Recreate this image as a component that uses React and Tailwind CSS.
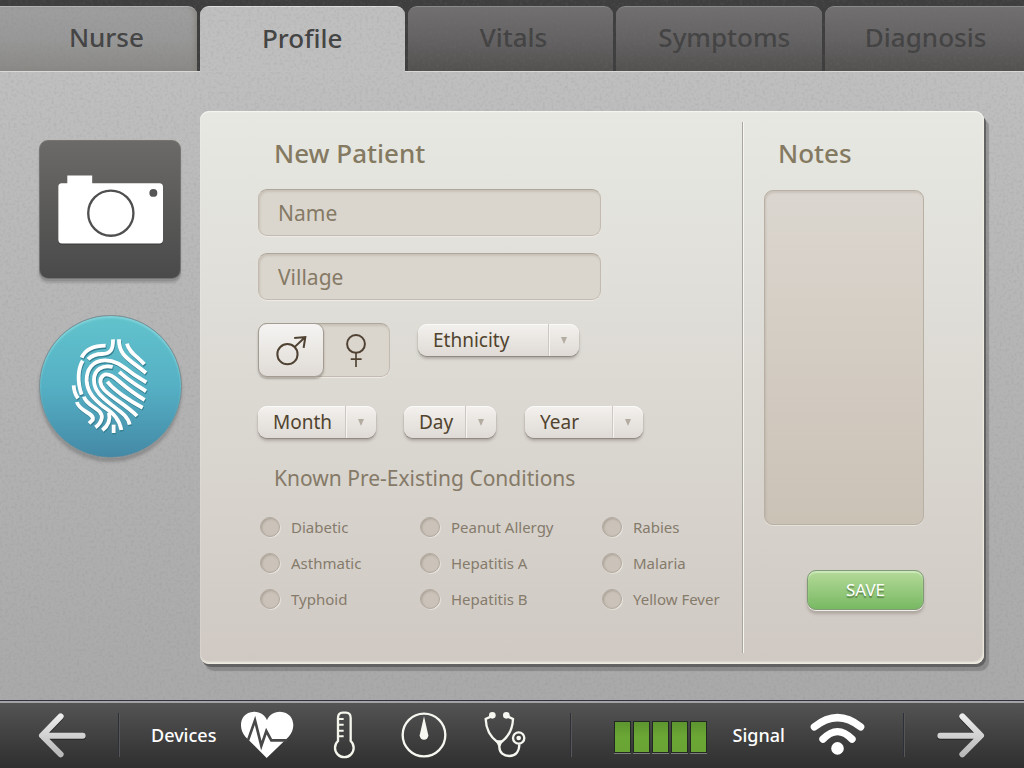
import React from "react";

const TABS = [
  { name: "Nurse", look: "rounded-tr-[9px] pl-4 text-[#444444] bg-linear-to-b from-[#9f9f9f] via-[#989898] to-[#8a8986] border-t border-[#b4b4b4] shadow-[inset_-5px_0_6px_-4px_#807e76]" },
  { name: "Profile", look: "rounded-t-[9px] text-[#434343] bg-[#bfbfbf] border-t border-[#dedede] -mb-px" },
  { name: "Vitals", look: "rounded-t-[9px] pl-1.5 text-[#434343] bg-linear-to-b from-[#716f70] via-[#646263] to-[#52514f] border-t border-[#8b8b8b]" },
  { name: "Symptoms", look: "rounded-t-[9px] pl-2.5 text-[#434343] bg-linear-to-b from-[#716f70] via-[#646263] to-[#52514f] border-t border-[#8b8b8b]" },
  { name: "Diagnosis", look: "rounded-tl-[9px] pl-0.5 text-[#434343] bg-linear-to-b from-[#716f70] via-[#646263] to-[#52514f] border-t border-[#8b8b8b]" },
];

const CONDITIONS = [
  "Diabetic", "Peanut Allergy", "Rabies",
  "Asthmatic", "Hepatitis A", "Malaria",
  "Typhoid", "Hepatitis B", "Yellow Fever",
];

function Grain() {
  return (
    <svg className="pointer-events-none absolute inset-0 h-full w-full" aria-hidden="true">
      <filter id="grain" x="0" y="0" width="100%" height="100%">
        <feTurbulence type="fractalNoise" baseFrequency="0.35" numOctaves="3" seed="4" />
        <feColorMatrix values="0 0 0 0 0.2  0 0 0 0 0.2  0 0 0 0 0.2  0.9 0 0 0 -0.4" />
      </filter>
      <rect width="100%" height="100%" filter="url(#grain)" opacity="0.4" />
    </svg>
  );
}

function CameraIcon() {
  return (
    <svg viewBox="110 158 322 212" className="h-[71px] w-[107px]" aria-hidden="true">
      <path d="M124 189H144V165H216V189H418Q429 189 429 200V359Q429 370 418 370H125Q114 370 114 359V200Q114 189 124 189Z" fill="#3f3f3f" />
      <path d="M124 185H141V162H216V185H418Q429 185 429 196V355Q429 366 418 366H125Q114 366 114 355V196Q114 185 124 185Z" fill="#fff" />
      <circle cx="272" cy="275" r="68" fill="none" stroke="#4f4f4f" strokeWidth="7" />
      <circle cx="400" cy="214" r="12" fill="#555" />
    </svg>
  );
}

const RIDGES = [
  "M47 71C58 47 82 35 119 35",
  "M66 76C80 62 92 60 108 60C132 60 142 48 141 16",
  "M159 16C158 66 190 76 240 117",
  "M183 29C190 58 216 68 235 91",
  "M50 80C36 104 33 142 47 182",
  "M23 154Q24 176 36 193",
  "M241 145L204 122C178 104 154 78 116 79C80 80 61 106 62 140C64 176 86 198 112 218C145 240 160 256 166 288",
  "M140 99C110 92 84 106 84 138C84 172 108 190 138 214C162 232 186 246 191 272",
  "M236 198C205 180 180 160 158 141C140 125 125 116 112 124C98 134 102 154 115 168C140 194 182 214 213 246",
  "M124 143C145 170 192 202 230 221",
  "M160 113C176 131 210 152 240 172",
  "M33 204C38 232 88 238 80 258L69 268",
  "M54 188C60 218 114 224 107 254Q103 270 88 280",
  "M129 236Q136 268 109 289",
  "M143 272V297",
];

function FingerprintIcon() {
  return (
    <svg viewBox="0 0 270 315" className="h-[105px] w-[90px]" fill="none" strokeWidth="11.5" aria-hidden="true">
      <g stroke="#347f92" transform="translate(2 4)">
        {RIDGES.map((d) => <path key={d} d={d} />)}
      </g>
      <g stroke="#fff">
        {RIDGES.map((d) => <path key={d} d={d} />)}
      </g>
    </svg>
  );
}

function ArrowIcon({ flip }) {
  const id = flip ? "next-fill" : "back-fill";
  return (
    <svg viewBox="0 0 144 144" className="h-12 w-12" fill="none" strokeLinecap="round" strokeLinejoin="round" strokeWidth="18" aria-hidden="true">
      <defs>
        <linearGradient id={id} x1="0" y1="0" x2="0" y2="144" gradientUnits="userSpaceOnUse">
          <stop offset="0.1" stopColor="#ececec" />
          <stop offset="0.9" stopColor="#b9b9b9" />
        </linearGradient>
      </defs>
      <g transform={flip ? "translate(144 0) scale(-1 1)" : undefined}>
        <path d="M68 19L13 77L68 132M14 77H136" stroke="#262626" />
        <path d="M68 16L12 74L68 130M13 74H134" stroke={`url(#${id})`} />
      </g>
    </svg>
  );
}

function HeartIcon() {
  return (
    <svg viewBox="720 66 162 144" className="h-12 w-[54px]" aria-hidden="true">
      <path d="M800 207L736 143C714 118 718 70 762 68C782 68 796 79 801 94C806 79 820 68 840 68C884 70 890 118 866 143Z" fill="#fff" />
      <path d="M744 154L765 94L784 170L799 126L814 154H862" fill="none" stroke="#484848" strokeWidth="8" />
    </svg>
  );
}

function ThermometerIcon() {
  return (
    <svg viewBox="1002 66 66 144" className="h-12 w-[22px]" fill="none" stroke="#f4f6ec" strokeWidth="7" aria-hidden="true">
      <path d="M1017 156V87Q1017 71 1031 71H1041Q1055 71 1055 87V156A28 28 0 1 1 1017 156Z" />
      <path d="M1017 90H1034M1017 107H1034M1017 125H1034M1017 142H1034" strokeWidth="6" />
    </svg>
  );
}

function GaugeIcon() {
  return (
    <svg viewBox="62 67 138 138" className="h-[46px] w-[46px]" aria-hidden="true">
      <circle cx="131" cy="136" r="64" fill="none" stroke="#f6f7f0" strokeWidth="7" />
      <path d="M131 80L144 137A13 13 0 0 1 118 137Z" fill="#f6f7f0" />
    </svg>
  );
}

function StethoscopeIcon() {
  return (
    <svg viewBox="314 66 126 141" className="h-[47px] w-[42px]" fill="none" stroke="#f6f7f0" strokeWidth="7" aria-hidden="true">
      <g fill="#f6f7f0" stroke="none">
        <circle cx="339" cy="79" r="10" />
        <circle cx="381" cy="79" r="10" />
        <path d="M348 154H372L363 172H357Z" />
        <circle cx="418" cy="147" r="7" />
      </g>
      <path d="M336 82L319 90C320 120 334 144 354 159M384 82L401 90C400 120 386 144 366 159" />
      <path d="M360 165V174C360 191 373 201 390 201C410 201 420 186 420 166" />
      <circle cx="418" cy="147" r="17" />
    </svg>
  );
}

function WifiIcon() {
  return (
    <svg viewBox="328 70 166 136" className="h-[45px] w-[55px]" fill="none" strokeLinecap="round" strokeWidth="22" aria-hidden="true">
      <g stroke="#fff">
        <path d="M341 115Q411 59 481 115" />
        <path d="M367 152Q411 106 455 152" />
      </g>
      <circle cx="411" cy="180" r="19" fill="#fff" />
    </svg>
  );
}

function MaleIcon() {
  return (
    <svg viewBox="106 72 92 92" className="h-[31px] w-[31px]" fill="none" stroke="#4f4232" strokeWidth="6" aria-hidden="true">
      <circle cx="140" cy="129" r="30" />
      <path d="M161 108L192 79M160 81L193 78L188 110" />
    </svg>
  );
}

function FemaleIcon() {
  return (
    <svg viewBox="315 66 66 106" className="h-[35px] w-[22px]" fill="none" stroke="#4f4232" strokeWidth="6" aria-hidden="true">
      <circle cx="348" cy="99" r="27" />
      <path d="M348 126V169M332 145H365" strokeWidth="5" />
    </svg>
  );
}

function Picker({ label, width }) {
  return (
    <div className={`grid h-8 rounded-[9px] bg-linear-to-b from-[#f3f1ee] to-[#dfdad5] shadow-[0_1px_1px_#8d8880,0_3px_3px_rgba(90,80,70,0.3),inset_0_1px_0_#fbfaf8] ${width}`}>
      <select aria-label={label} className="col-start-1 row-start-1 h-8 w-full appearance-none rounded-[9px] bg-transparent pl-[15px] text-[19px] leading-8 text-[#51442f]">
        <option>{label}</option>
      </select>
      <span className="pointer-events-none col-start-1 row-start-1 flex w-[31px] items-center justify-center justify-self-end border-l border-[#cdc8c2] shadow-[inset_1px_0_0_#f6f4f2]">
        <svg viewBox="0 0 6 7" className="h-[7px] w-[6px]" aria-hidden="true"><path d="M0 0H6L3 7Z" fill="#b3aca0" /></svg>
      </span>
    </div>
  );
}

const FIELD = "rounded-[9px] border border-[#c3bbb1] border-t-[#aea59b] bg-[#dad5cd] shadow-[inset_1px_2px_2px_rgba(120,110,95,0.18),0_1px_0_#eeebe6] text-[#7d735f] placeholder:text-[#857a65] placeholder:opacity-100";

function Divider() {
  return <span className="block h-11 w-0.5 shrink-0 border-l border-[#2d3038] bg-[#565656]" />;
}

export default function App() {
  return (
    <div className="flex min-h-screen flex-col bg-[#b0b0b0] font-['Noto_Sans','Open_Sans',sans-serif]">
      <header className="relative z-10 bg-[#3e3e3e] pt-1.5">
        <nav className="grid h-[65px] grid-cols-[197fr_205fr_206fr_206fr_199fr] gap-[3px]">
          {TABS.map((t) => (
            <button key={t.name} type="button" className={`pb-1 text-[26px] leading-8 font-medium ${t.look}`}>
              {t.name}
            </button>
          ))}
        </nav>
        <Grain />
      </header>

      <main className="relative flex flex-1 border-t border-[#d9d7d8] bg-linear-to-b from-[#bfbfbf] to-[#a9a9a9] pt-[39px] pb-9">
        <Grain />
        <aside className="relative flex w-[200px] shrink-0 flex-col gap-9 pt-[29px] pl-[39px]">
          <button type="button" aria-label="Take photo" className="flex h-[139px] w-[142px] items-center justify-center rounded-[9px] border border-[#757472] bg-linear-to-b from-[#6b6a68] to-[#4a4a4a] shadow-[0_2px_0_#8f8f8f,0_4px_2px_rgba(80,80,80,0.25),0_-1px_0_#bcb9b4]">
            <CameraIcon />
          </button>
          <button type="button" aria-label="Scan fingerprint" className="flex h-[143px] w-[143px] items-center justify-center rounded-full border border-[#7d8d92] bg-linear-to-b from-[#62c3cc] via-[#55b0c4] to-[#4489a6] shadow-[0_4px_3px_rgba(80,80,80,0.35),inset_0_2px_2px_#83d3da]">
            <FingerprintIcon />
          </button>
        </aside>

        <form onSubmit={(e) => e.preventDefault()} className="relative mr-10 grid flex-1 grid-cols-[542fr_242fr] rounded-[9px] bg-linear-to-b from-[#e7e8e2] via-[#dcd9d3] to-[#d0c9c3] shadow-[inset_0_1px_1px_#f7f7f2,inset_-1px_-2px_2px_#f0eee2,2px_3px_0_#626262,5px_7px_1px_rgba(80,80,80,0.35)]">
          <section className="pt-[26px] pb-[54px] pl-[58px]">
            <h1 className="pl-4 text-[26px] leading-8 font-medium text-[#847961]">New Patient</h1>
            <input aria-label="Name" placeholder="Name" className={`mt-5 block h-[47px] w-[343px] px-[19px] text-[21px] ${FIELD}`} />
            <input aria-label="Village" placeholder="Village" className={`mt-[17px] block h-[47px] w-[343px] px-[19px] text-[21px] ${FIELD}`} />

            <div className="mt-[23px] flex items-start gap-7">
              <div role="radiogroup" aria-label="Sex" className={`flex h-[54px] w-[132px] ${FIELD}`}>
                <label className="-m-px flex w-[66px] items-center justify-center rounded-[9px] border border-[#a39c93] bg-linear-to-b from-[#f5f4f2] to-[#e0dbd6] shadow-[0_2px_2px_rgba(90,80,70,0.4)]">
                  <input type="radio" name="sex" defaultChecked aria-label="Male" className="sr-only" />
                  <MaleIcon />
                </label>
                <label className="flex flex-1 items-center justify-center">
                  <input type="radio" name="sex" aria-label="Female" className="sr-only" />
                  <FemaleIcon />
                </label>
              </div>
              <Picker label="Ethnicity" width="mt-px w-[161px]" />
            </div>

            <div className="mt-[29px] flex">
              <Picker label="Month" width="w-[118px]" />
              <div className="ml-7"><Picker label="Day" width="w-[92px]" /></div>
              <div className="ml-[29px]"><Picker label="Year" width="w-[118px]" /></div>
            </div>

            <fieldset className="mt-6">
              <legend className="pl-4 text-[21px] leading-8 text-[#857a67]">Known Pre-Existing Conditions</legend>
              <div className="mt-[23px] grid grid-cols-[160fr_182fr_140fr] gap-y-4 pl-0.5">
                {CONDITIONS.map((c) => (
                  <label key={c} className="flex h-5 items-center gap-[11px] text-[15px] leading-5 whitespace-nowrap text-[#857b6b]">
                    <input type="checkbox" className="h-5 w-5 appearance-none rounded-full border border-[#b1a99f] bg-[#cbc3b9] shadow-[inset_1px_1px_2px_rgba(110,100,85,0.35),1px_1px_0_#e6e2dc] checked:bg-[#857b6b]" />
                    {c}
                  </label>
                ))}
              </div>
            </fieldset>
          </section>

          <section className="my-[11px] flex flex-col border-l border-[#a9a6a0] pt-[15px] pb-[43px] pr-[60px] pl-[21px] shadow-[inset_1px_0_0_#f7f5f0]">
            <h2 className="pl-3.5 text-[26px] leading-8 font-medium text-[#847961]"><label htmlFor="notes">Notes</label></h2>
            <textarea id="notes" className="mt-[21px] block w-full flex-1 resize-none rounded-[9px] border border-[#b9b0a5] bg-linear-to-b from-[#dbd6cf] to-[#cbc2b6] p-3 text-[17px] text-[#7d735f] shadow-[inset_1px_2px_2px_rgba(120,110,95,0.18),0_1px_0_#e6e2dc]" />
            <button type="submit" className="mt-[45px] h-10 w-[117px] self-end rounded-[9px] border border-[#7f9a75] bg-linear-to-b from-[#b4da98] to-[#78b963] text-[17px] leading-6 text-white shadow-[0_1px_0_#f2f0ec,0_4px_3px_rgba(110,100,90,0.35),inset_0_2px_1px_#cde8bb] text-shadow-[0_2px_1px_rgba(60,90,50,0.6)]">
              SAVE
            </button>
          </section>
        </form>
      </main>

      <footer className="relative grid h-[68px] grid-cols-[120fr_452fr_333fr_119fr] items-center border-t border-[#33333f] bg-linear-to-b from-[#555555] to-[#2f2f2f] text-[18px] leading-6 font-medium text-white shadow-[inset_0_2px_0_#a3a2a6]">
        <div className="flex items-center justify-between pl-[38px]">
          <button type="button" aria-label="Back"><ArrowIcon /></button>
          <Divider />
        </div>
        <div className="flex items-center justify-between pl-[31px]">
          <span>Devices</span>
          <button type="button" aria-label="Heart rate"><HeartIcon /></button>
          <button type="button" aria-label="Temperature" className="ml-4"><ThermometerIcon /></button>
          <button type="button" aria-label="Blood pressure" className="ml-[22px]"><GaugeIcon /></button>
          <button type="button" aria-label="Stethoscope" className="ml-3.5"><StethoscopeIcon /></button>
          <span className="ml-5"><Divider /></span>
        </div>
        <div className="flex items-center justify-between pl-[42px]">
          <div className="flex gap-0.5 pt-1" role="img" aria-label="Battery full">
            {[0, 1, 2, 3, 4].map((n) => (
              <span key={n} className="h-8 w-[17px] border border-[#222822] bg-linear-to-b from-[#5d952f] via-[#6ba735] to-[#69a434] shadow-[0_1px_0_#7d7d7d]" />
            ))}
          </div>
          <span>Signal</span>
          <WifiIcon />
          <span className="ml-3"><Divider /></span>
        </div>
        <div className="flex items-center pl-8">
          <button type="button" aria-label="Next"><ArrowIcon flip /></button>
        </div>
      </footer>
    </div>
  );
}
